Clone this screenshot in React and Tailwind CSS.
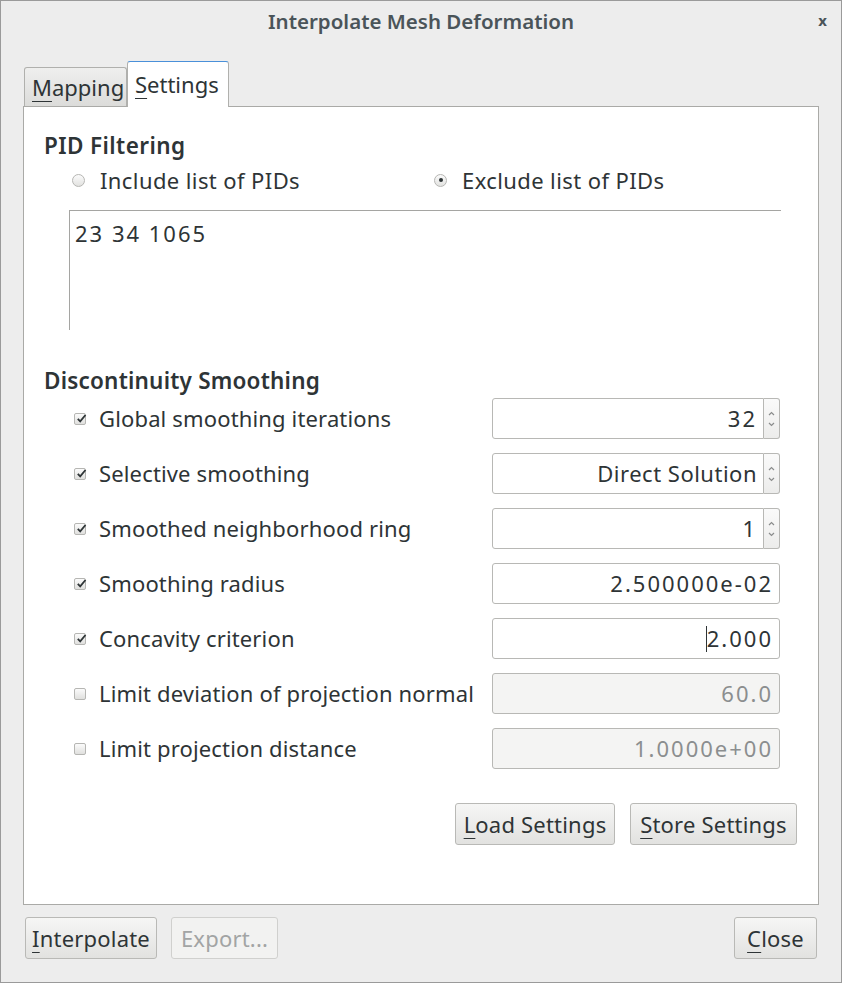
import React from 'react';

const font = { fontFamily: '"Noto Sans", "DejaVu Sans", sans-serif' };

const rows = [
  { label: 'Global smoothing iterations', value: '32', checked: true, spin: true },
  { label: 'Selective smoothing', value: 'Direct Solution', checked: true, spin: true, word: true },
  { label: 'Smoothed neighborhood ring', value: '1', checked: true, spin: true },
  { label: 'Smoothing radius', value: '2.500000e-02', checked: true },
  { label: 'Concavity criterion', value: '2.000', checked: true, caret: true },
  { label: 'Limit deviation of projection normal', value: '60.0', checked: false, disabled: true },
  { label: 'Limit projection distance', value: '1.0000e+00', checked: false, disabled: true },
];

const Check = ({ checked }) => (
  <div className="relative w-[12px] h-[12px] rounded-[2px] border border-[#b6b6b3] bg-gradient-to-b from-[#fbfbfb] to-[#e0e0de]">
    {checked && (
      <svg className="absolute left-[1px] -top-[1px]" width="11" height="11" viewBox="0 0 11 11">
        <path d="M1.8 5.8 L4.2 8.3 L9.5 2" stroke="#2e3436" strokeWidth="1.8" fill="none" />
      </svg>
    )}
  </div>
);

const Radio = ({ on }) => (
  <div className="w-[13px] h-[13px] rounded-full border border-[#b6b6b3] bg-gradient-to-b from-[#fbfbfb] to-[#e2e2e0] flex items-center justify-center">
    {on && <div className="w-[4px] h-[4px] rounded-full bg-[#2e3436]" />}
  </div>
);

const Btn = ({ u, rest, className = '', disabled }) => (
  <button
    className={`h-[42px] px-[6px] rounded-[3px] border text-[22px] tracking-[0.2px] whitespace-nowrap ${
      disabled
        ? 'border-[#d0d0ce] bg-[#f2f2f1] text-[#a2a4a4]'
        : 'border-[#b9b9b6] bg-gradient-to-b from-[#f6f6f5] to-[#e2e2e0] text-[#2e3436]'
    } ${className}`}
  >
    {u && <span className="underline underline-offset-[5px] decoration-1">{u}</span>}
    {rest}
  </button>
);

export default function App() {
  return (
    <div style={font} className="w-[842px] h-[983px] bg-[#ededed] border border-[#9a9a9a] flex flex-col text-[#2e3436]">
      <div className="h-[40px] flex items-center justify-center relative">
        <span className="text-[20.5px] font-semibold text-[#4a5459]">Interpolate Mesh Deformation</span>
        <span className="absolute right-[14px] top-[8px] text-[15px] font-bold text-[#4a5459]">x</span>
      </div>

      <div className="mt-[20px] px-[22px] flex items-end">
        <div className="ml-[1px] w-[103px] h-[39px] bg-gradient-to-b from-[#efefee] to-[#dcdcda] border border-[#b0b0ad] border-b-0 rounded-t-[3px] flex items-center pl-[7px] text-[22px] text-[#2e3436]">
          <span className="underline underline-offset-[5px] decoration-1">M</span>apping
        </div>
        <div className="w-[102px] h-[46px] bg-white border border-[#b0b0ad] border-t-[#4a90d9] border-b-0 rounded-t-[3px] flex items-center pl-[7px] text-[22px] -mb-[1px] relative z-10">
          <span className="underline underline-offset-[5px] decoration-1">S</span>ettings
        </div>
      </div>

      <div className="mx-[22px] h-[799px] bg-white border border-[#aaaaa7] flex flex-col">
        <div className="pl-[20px] pt-[25px] text-[22.5px] font-semibold leading-[28px] tracking-[0.4px]">PID Filtering</div>
        <div className="flex items-center h-[30px] mt-[5px] text-[22px] tracking-[0.4px]">
          <div className="pl-[48px] w-[410px] flex items-center gap-[15px]">
            <Radio />
            <span>Include list of PIDs</span>
          </div>
          <div className="flex items-center gap-[15px]">
            <Radio on />
            <span>Exclude list of PIDs</span>
          </div>
        </div>
        <div className="ml-[45px] mt-[15px] w-[712px] h-[120px] border-t border-l border-[#a5a5a2] pl-[5px] pt-[8px] text-[22px] leading-[28px] tracking-[2px]">
          23 34 1065
        </div>

        <div className="pl-[20px] mt-[37px] text-[22.5px] font-semibold leading-[28px] tracking-[0.2px]">Discontinuity Smoothing</div>

        <div className="flex flex-col gap-[14px] mt-[3px]">
          {rows.map((r) => (
            <div key={r.label} className="flex items-center h-[41px]">
              <div className="pl-[50px] w-[468px] flex items-center gap-[13px] text-[22px] tracking-[0.15px]">
                <Check checked={r.checked} />
                <span>{r.label}</span>
              </div>
              <div className="flex">
                <div
                  className={`h-[41px] ${r.spin ? 'w-[272px] rounded-l-[3px]' : 'w-[288px] rounded-[3px]'} border border-[#b8b8b5] ${
                    r.disabled ? 'bg-[#f4f4f3] text-[#8b8e8f]' : 'bg-white'
                  } flex items-center justify-end pr-[6px] text-[22px] ${r.word ? 'tracking-[0.5px]' : 'tracking-[2px]'}`}
                >
                  {r.caret && <span className="w-[1px] h-[26px] bg-[#2e3436]" />}
                  <span>{r.value}</span>
                </div>
                {r.spin && (
                  <div className="w-[16px] h-[41px] border border-l-0 border-[#b8b8b5] rounded-r-[3px] bg-gradient-to-b from-[#fafafa] to-[#ececeb] flex flex-col items-center justify-center gap-[6px]">
                    <svg width="7" height="5" viewBox="0 0 7 5"><path d="M1 4 L3.5 1.5 L6 4" stroke="#8a8c8c" strokeWidth="1.2" fill="none" /></svg>
                    <svg width="7" height="5" viewBox="0 0 7 5"><path d="M1 1 L3.5 3.5 L6 1" stroke="#8a8c8c" strokeWidth="1.2" fill="none" /></svg>
                  </div>
                )}
              </div>
            </div>
          ))}
        </div>

        <div className="flex justify-end gap-[15px] pr-[21px] mt-[34px]">
          <Btn u="L" rest="oad Settings" className="w-[160px]" />
          <Btn u="S" rest="tore Settings" className="w-[167px]" />
        </div>
      </div>

      <div className="flex items-center px-[24px] mt-[12px]">
        <Btn u="I" rest="nterpolate" className="w-[132px]" />
        <Btn rest="Export..." disabled className="w-[107px] ml-[14px]" />
        <div className="flex-1" />
        <Btn u="C" rest="lose" className="w-[83px]" />
      </div>
    </div>
  );
}
